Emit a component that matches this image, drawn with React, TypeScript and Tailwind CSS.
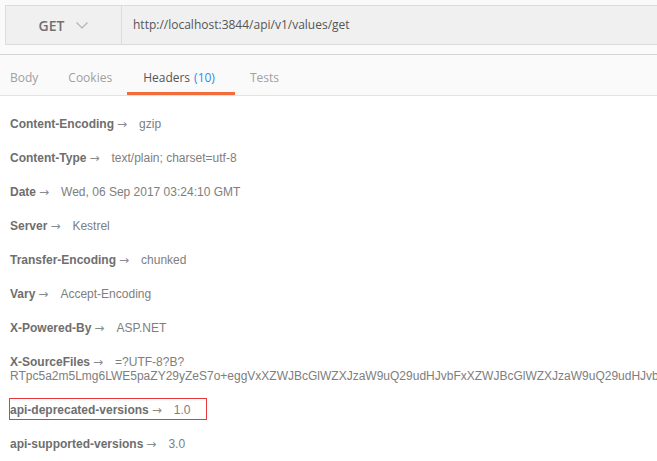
import React from 'react';

const headers: { name: string; value: React.ReactNode; marked?: boolean }[] = [
  { name: 'Content-Encoding', value: 'gzip' },
  { name: 'Content-Type', value: 'text/plain; charset=utf-8' },
  { name: 'Date', value: 'Wed, 06 Sep 2017 03:24:10 GMT' },
  { name: 'Server', value: 'Kestrel' },
  { name: 'Transfer-Encoding', value: 'chunked' },
  { name: 'Vary', value: 'Accept-Encoding' },
  { name: 'X-Powered-By', value: 'ASP.NET' },
  {
    name: 'X-SourceFiles',
    value: (
      <>
        =?UTF-8?B?
        <br />
        <span className="whitespace-nowrap">
          RTpc5a2m5Lmg6LWE5paZY29yZeS7o+eggVxXZWJBcGlWZXJzaW9uQ29udHJvbFxXZWJBcGlWZXJzaW9uQ29udHJvbFxhcGlcdjFcdmFsdWVzXGdldA==?=
        </span>
      </>
    ),
  },
  { name: 'api-deprecated-versions', value: '1.0', marked: true },
  { name: 'api-supported-versions', value: '3.0' },
];

const tabs = [
  { label: 'Body', cls: 'pl-[10px] pr-[15px]' },
  { label: 'Cookies', cls: 'px-[15px]' },
  { label: 'Headers', count: '(10)', active: true, cls: 'pl-[16px] pr-[20px]' },
  { label: 'Tests', cls: 'px-[15px]' },
];

function Chevron() {
  return (
    <svg width="12" height="7" viewBox="0 0 12 7" className="ml-[12px]">
      <path d="M0.5 0.5 L6 6 L11.5 0.5" fill="none" stroke="#b3b3b3" strokeWidth="1.2" />
    </svg>
  );
}

export default function App() {
  return (
    <div className="w-[657px] h-[461px] overflow-hidden bg-white font-['Liberation_Sans',Arial,sans-serif]">
      <div className="bg-[#fafafa] pt-[5px] pl-[5px] h-[55px] border-b border-[#d6d6d6]">
        <div className="flex h-[40px] bg-[#f0f0f0] border-y border-l border-[#dcdcdc] font-['Open_Sans',sans-serif]">
          <div className="w-[116px] flex items-center justify-center border-r border-[#dcdcdc]">
            <span className="text-[14px] font-semibold text-[#707070]">GET</span>
            <Chevron />
          </div>
          <div className="flex items-center pl-[11px] text-[12px] text-[#555555]">
            http://localhost:3844/api/v1/values/get
          </div>
        </div>
      </div>
      <div className="flex h-[41px] bg-[#fafafa] border-b border-[#e3e3e3] font-['Open_Sans',sans-serif] text-[12px]">
        {tabs.map((t) => (
          <div
            key={t.label}
            className={`${t.cls} flex items-center pt-[8px] border-b-[3px] ${
              t.active ? 'border-[#f26b3a] text-[#555555]' : 'border-transparent text-[#a0a0a0]'
            }`}
          >
            {t.label}
            {t.count && <span className="ml-[4px] text-[#2d8ceb]">{t.count}</span>}
          </div>
        ))}
      </div>
      <div className="pt-[11px] pl-[10px] text-[12px] leading-[14px]">
        {headers.map((h) => (
          <div key={h.name} className="py-[10px]">
            <span className="relative">
              {h.marked && (
                <span className="absolute left-[-1px] top-[-5px] w-[198px] h-[22px] border border-[#e8373d]" />
              )}
              <span className="font-bold text-[#6e6e6e]">{h.name}</span>
              <span className="inline-block h-[14px] align-top leading-[14px] ml-[3px] font-['DejaVu_Sans',sans-serif] text-[12px] text-[#8a8a8a]">
                →
              </span>
              <span className="ml-[12px] text-[#7e7e7e]">{h.value}</span>
            </span>
          </div>
        ))}
      </div>
    </div>
  );
}
